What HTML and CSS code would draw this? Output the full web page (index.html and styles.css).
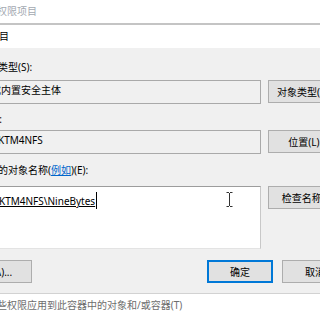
FILE: index.html
```html
<!DOCTYPE html>
<html lang="zh-CN">
<head>
  <meta charset="UTF-8" />
  <meta name="viewport" content="width=device-width, initial-scale=1.0"/>
  <title>选择用户或组</title>
  <link rel="stylesheet" href="styles.css">
</head>
<body>

  <div class="titlebar"><span class="title">的权限项目</span></div>
  <div class="back-row"><span class="back-text">目</span></div>

  <div class="dialog">
    <div class="form">
      <label class="label">选择此对象类型(S):</label>
      <div class="field-row">
        <div class="textbox readonly">用户、组或内置安全主体</div>
        <button class="btn">对象类型(O)...</button>
      </div>

      <label class="label label-2">查找位置(F):</label>
      <div class="field-row">
        <div class="textbox readonly">DESKTOP-KTM4NFS</div>
        <button class="btn">位置(L)...</button>
      </div>

      <label class="label label-3">输入要选择的对象名称(<a href="#" class="link">例如</a>)(E):</label>
      <div class="field-row">
        <div class="textbox names">
          <span class="resolved">DESKTOP-KTM4NFS\NineBytes</span><span class="caret"></span>
          <svg class="ibeam" width="7" height="15" viewBox="0 0 7 15">
            <path d="M0.5 0.5h2.5M4 0.5h2.5M3.5 1v13M0.5 14.5h2.5M4 14.5h2.5" stroke="#333" stroke-width="1" fill="none"/>
          </svg>
        </div>
        <button class="btn">检查名称(C)</button>
      </div>

      <div class="actions">
        <button class="btn btn-adv">高级(A)...</button>
        <button class="btn btn-small btn-default">确定</button>
        <button class="btn btn-small">取消</button>
      </div>
    </div>
  </div>

  <div class="footer">
    <span class="footer-text">仅将这些权限应用到此容器中的对象和/或容器(T)</span>
  </div>

</body>
</html>
```

FILE: styles.css
```css
* {
  box-sizing: border-box;
  margin: 0;
  padding: 0;
  font-family: "Noto Sans", "Noto Sans CJK SC", sans-serif;
}

body {
  width: 320px;
  height: 320px;
  overflow: hidden;
  background: #ffffff;
  font-size: 10px;
  color: #000;
}

.titlebar {
  height: 25px;
  line-height: 23px;
  background: #fff;
  border-bottom: 2px solid #c4c4c4;
  white-space: nowrap;
  overflow: hidden;
}

.title {
  display: inline-block;
  margin-left: -13px;
  color: #a3a9b1;
}

.back-row {
  height: 23px;
  line-height: 22px;
  background: #fff;
  white-space: nowrap;
}

.back-text {
  display: inline-block;
  margin-left: -1px;
}

.dialog {
  height: 245px;
  background: #f0f0f0;
  padding-top: 12px;
  overflow: hidden;
}

.form {
  margin-left: -52px;
  width: 430px;
}

.label {
  display: block;
  line-height: 14px;
  height: 14px;
  margin-bottom: 6px;
  white-space: nowrap;
}

.label-2 {
  margin-top: 8px;
  margin-bottom: 4px;
}

.label-3 {
  margin-top: 9px;
  margin-bottom: 9px;
}

.link {
  color: #0066cc;
  text-decoration: underline;
}

.field-row {
  display: flex;
  gap: 7px;
  align-items: flex-start;
}

.textbox {
  width: 313px;
  height: 24px;
  border: 1px solid #a9a9a9;
  padding: 2px 3px 0 2px;
  line-height: 14px;
  white-space: nowrap;
  overflow: hidden;
}

.readonly {
  background: #f0f0f0;
}

.names {
  position: relative;
  height: 63px;
  background: #fff;
  border-color: #9c9c9c #c8c8c8 #e3e3e3 #9c9c9c;
  padding-top: 5px;
  padding-left: 3px;
}

.resolved {
  text-decoration: underline;
}

.caret {
  display: inline-block;
  width: 1px;
  height: 17px;
  background: #000;
  margin-left: 1px;
  vertical-align: -4px;
}

.ibeam {
  position: absolute;
  left: 277px;
  top: 5px;
}

.btn {
  width: 80px;
  height: 23px;
  background: #e1e1e1;
  border: 1px solid #adadad;
  font-size: 10px;
  color: #000;
  line-height: 20px;
  white-space: nowrap;
}

.actions {
  display: flex;
  gap: 9px;
  margin-top: 11px;
}

.btn-small {
  width: 66px;
}

.btn-adv {
  margin-left: 4px;
  margin-right: 166px;
}

.btn-default {
  border-color: #0078d7;
  box-shadow: inset 0 0 0 1px #0078d7;
}

.footer {
  height: 27px;
  border-top: 1px solid #d2d2d2;
  background: #fff;
  line-height: 22px;
  white-space: nowrap;
  overflow: hidden;
}

.footer-text {
  display: inline-block;
  margin-left: -33px;
  color: #6d6d6d;
}
```
